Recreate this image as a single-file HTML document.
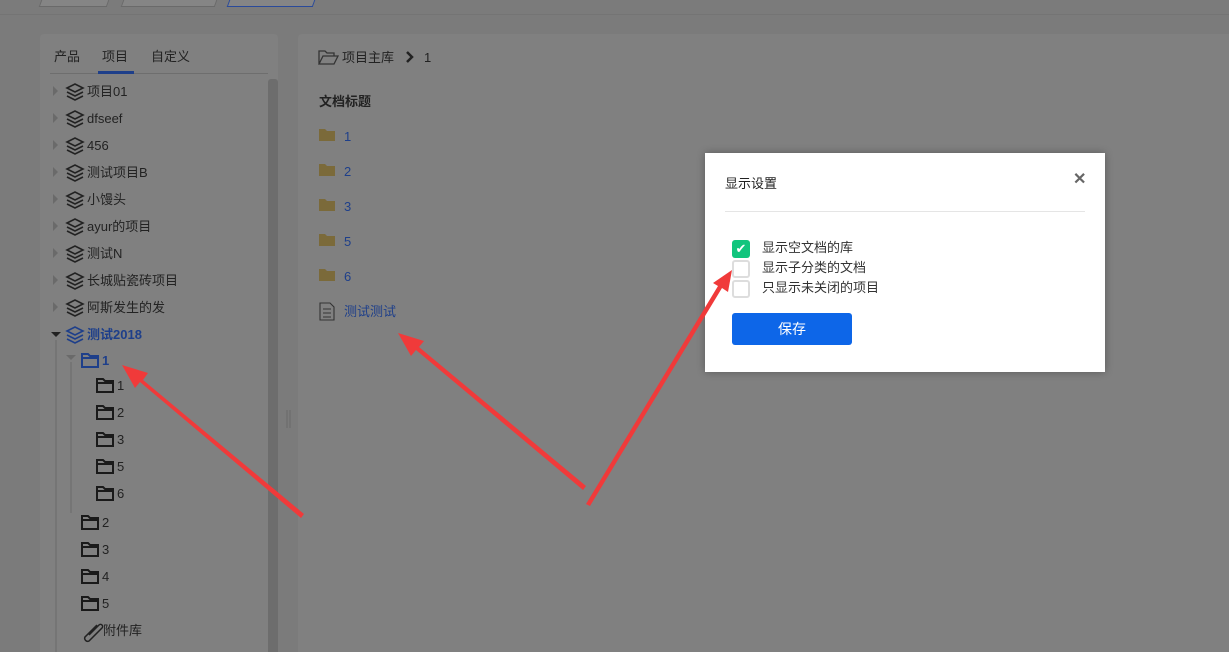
<!DOCTYPE html>
<html><head><meta charset="utf-8"><style>
html,body{margin:0;width:1229px;height:652px;overflow:hidden}
body{background:#7b7b7b;font-family:"Liberation Sans","Noto Sans CJK SC",sans-serif;position:relative;font-size:13px;color:#222}
.a{position:absolute}
.tab{position:absolute;top:0;height:6px;border:1px solid #6a6a6a;border-top:none;background:#858585}
.panel{background:#808080;border-radius:4px}
</style></head><body>
<div class="tab" style="left:40px;width:66px;transform:skewX(-20deg)"></div>
<div class="tab" style="left:122px;width:92px;transform:skewX(-20deg)"></div>
<div class="tab" style="left:228px;width:84px;border-color:#2a4a9a;transform:skewX(-20deg)"></div>
<div class="a" style="left:0;top:14px;width:1229px;height:1px;background:#747474"></div>

<div class="a panel" style="left:40px;top:34px;width:238px;height:640px">
 <div class="a" style="left:14px;top:12px;font-size:13px">产品</div>
 <div class="a" style="left:62px;top:12px">项目</div>
 <div class="a" style="left:111px;top:12px">自定义</div>
 <div class="a" style="left:10px;top:39px;width:218px;height:1px;background:#6e6e6e"></div>
 <div class="a" style="left:58px;top:37px;width:36px;height:3px;background:#1e3f8a"></div>
 <div class="a" style="left:228px;top:45px;width:10px;height:600px;background:#6d6d6d;border-radius:3px"></div>
</div>
<svg class="a" style="left:0;top:0" width="300" height="652">
<defs><g id="ly"><path d="M0 5 L8 1 L16 5 L8 9 Z" fill="none" stroke="#222" stroke-width="1.6"/><path d="M0 9 L8 13 L16 9 M0 13 L8 17 L16 13" fill="none" stroke="#222" stroke-width="1.6"/></g>
<g id="fd"><path d="M1 2 H7 L9 4 H17 V15 H1 Z M1 6 H17" fill="none" stroke="#1a1a1a" stroke-width="2"/></g></defs>
<g fill="#6a6a6a"><path d="M53 86 l5 5 l-5 5z"/><path d="M53 113 l5 5 l-5 5z"/><path d="M53 140 l5 5 l-5 5z"/><path d="M53 167 l5 5 l-5 5z"/><path d="M53 194 l5 5 l-5 5z"/><path d="M53 221 l5 5 l-5 5z"/><path d="M53 248 l5 5 l-5 5z"/><path d="M53 275 l5 5 l-5 5z"/><path d="M53 302 l5 5 l-5 5z"/></g>
<path d="M51 332 h10 l-5 5z" fill="#222"/><path d="M66 355 h10 l-5 5z" fill="#6a6a6a"/>
<line x1="56" y1="340" x2="56" y2="652" stroke="#6a6a6a"/><line x1="71" y1="362" x2="71" y2="513" stroke="#6a6a6a"/>
<use href="#ly" x="67" y="83"/><use href="#ly" x="67" y="110"/><use href="#ly" x="67" y="137"/><use href="#ly" x="67" y="164"/><use href="#ly" x="67" y="191"/><use href="#ly" x="67" y="218"/><use href="#ly" x="67" y="245"/><use href="#ly" x="67" y="272"/><use href="#ly" x="67" y="299"/>
<g transform="translate(67,326)"><path d="M0 5 L8 1 L16 5 L8 9 Z M0 9 L8 13 L16 9 M0 13 L8 17 L16 13" fill="none" stroke="#1e3f8a" stroke-width="1.6"/></g>
<g transform="translate(81,352)"><path d="M1 2 H7 L9 4 H17 V15 H1 Z M1 6 H17" fill="none" stroke="#1e3f8a" stroke-width="2"/></g>
<use href="#fd" x="96" y="377"/><use href="#fd" x="96" y="404"/><use href="#fd" x="96" y="431"/><use href="#fd" x="96" y="458"/><use href="#fd" x="96" y="485"/>
<use href="#fd" x="81" y="514"/><use href="#fd" x="81" y="541"/><use href="#fd" x="81" y="568"/><use href="#fd" x="81" y="595"/>
<path d="M97 625 l-12 12 a3 3 0 0 0 4 4 l13 -13 a2 2 0 0 0 -3 -3 l-10 10" fill="none" stroke="#222" stroke-width="1.5"/>
<g font-family="Liberation Sans,Noto Sans CJK SC,sans-serif" font-size="13" fill="#222">
<text x="87" y="96">项目01</text><text x="87" y="123">dfseef</text><text x="87" y="150">456</text><text x="87" y="177">测试项目B</text><text x="87" y="204">小馒头</text><text x="87" y="231">ayur的项目</text><text x="87" y="258">测试N</text><text x="87" y="285">长城贴瓷砖项目</text><text x="87" y="312">阿斯发生的发</text>
<text x="87" y="339" fill="#1e3f8a" font-weight="bold">测试2018</text><text x="102" y="365" fill="#1e3f8a" font-weight="bold">1</text>
<text x="117" y="390">1</text><text x="117" y="417">2</text><text x="117" y="444">3</text><text x="117" y="471">5</text><text x="117" y="498">6</text>
<text x="102" y="527">2</text><text x="102" y="554">3</text><text x="102" y="581">4</text><text x="102" y="608">5</text><text x="103" y="635">附件库</text></g>
<path d="M287 410 v18 M290 410 v18" stroke="#6a6a6a"/>
</svg>

<div class="a panel" style="left:298px;top:34px;width:940px;height:640px"></div>
<svg class="a" style="left:298px;top:34px" width="600" height="300">
<path d="M21 30 V17 H27 L29 19 H36 V22 M21 30 L25 22 H40 L36 30 Z" fill="none" stroke="#333" stroke-width="1.3"/>
<path d="M109 18 l5 5 l-5 5" fill="none" stroke="#222" stroke-width="2.5"/>
<g fill="#7b6a3a"><path d="M21 95 h6 l2 2 h8 v10 h-16z"/><path d="M21 130 h6 l2 2 h8 v10 h-16z"/><path d="M21 165 h6 l2 2 h8 v10 h-16z"/><path d="M21 200 h6 l2 2 h8 v10 h-16z"/><path d="M21 235 h6 l2 2 h8 v10 h-16z"/></g>
<path d="M22 269 h10 l4 4 v13 h-14z M25 275 h8 M25 279 h8 M25 283 h8" fill="none" stroke="#333" stroke-width="1.1"/>
<g font-family="Liberation Sans,Noto Sans CJK SC,sans-serif" font-size="13" fill="#222">
<text x="44" y="28">项目主库</text><text x="126" y="28">1</text><text x="21" y="72" font-weight="bold">文档标题</text>
<g fill="#1e3f8a"><text x="46" y="107">1</text><text x="46" y="142">2</text><text x="46" y="177">3</text><text x="46" y="212">5</text><text x="46" y="247">6</text><text x="46" y="282">测试测试</text></g></g>
</svg>

<div class="a" style="left:705px;top:153px;width:400px;height:219px;background:#fff;box-shadow:0 0 8px rgba(0,0,0,.3)">
 <div class="a" style="left:20px;top:20px;font-size:13px;color:#222">显示设置</div>
 <div class="a" style="left:368px;top:16px;font-size:16px;font-weight:bold;color:#666">✕</div>
 <div class="a" style="left:20px;top:58px;width:360px;height:1px;background:#e5e5e5"></div>
 <div class="a" style="left:27px;top:87px;width:18px;height:18px;background:#11c57d;border-radius:3px;color:#fff;font-size:13px;line-height:18px;text-align:center">✔</div>
 <div class="a" style="left:27px;top:107px;width:14px;height:14px;border:2px solid #ddd;border-radius:3px"></div>
 <div class="a" style="left:27px;top:127px;width:14px;height:14px;border:2px solid #ddd;border-radius:3px"></div>
 <div class="a" style="left:57px;top:85px;font-size:13px;line-height:20px;color:#333">显示空文档的库<br>显示子分类的文档<br>只显示未关闭的项目</div>
 <div class="a" style="left:27px;top:160px;width:120px;height:32px;background:#0d66e8;border-radius:3px;color:#fff;text-align:center;line-height:32px;font-size:14px">保存</div>
</div>

<svg class="a" style="left:0;top:0" width="1229" height="652">
<g fill="#f03a3a">
<path d="M304 514 L143 380 L148 373 L122 365 L135 388 L140 382 L301 518Z"/>
<path d="M586 486 L419 347 L424 341 L398 333 L411 356 L416 350 L583 490Z"/>
<path d="M590 506 L722 288 L728 292 L732 270 L713 283 L718 286 L586 504Z"/>
</g></svg>
</body></html>
